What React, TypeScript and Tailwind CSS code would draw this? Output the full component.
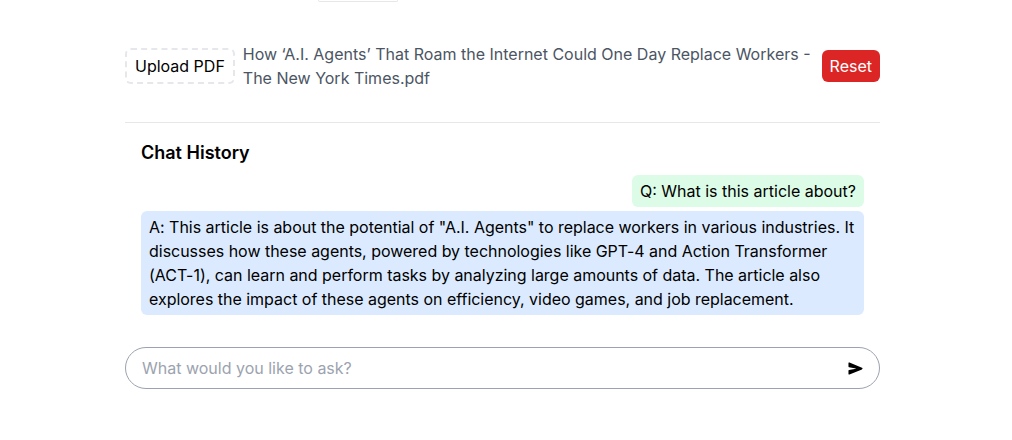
import React from "react";
import { IoSend } from "react-icons/io5";

const answer =
  'A: This article is about the potential of "A.I. Agents" to replace workers in various industries. It discusses how these agents, powered by technologies like GPT-4 and Action Transformer (ACT-1), can learn and perform tasks by analyzing large amounts of data. The article also explores the impact of these agents on efficiency, video games, and job replacement.';

const App = () => {
  return (
    <div className="min-h-[440px] bg-white text-[#111827] font-['Inter','Liberation_Sans',sans-serif]">
      <div className="ml-[125px] w-[755px]">
        {/* bottom edge of the element above, cut off by the viewport */}
        <div className="ml-[193px] w-[80px] h-[2px] border-x border-b border-[#e5e7eb] rounded-b-md" />

        <div className="mt-[40px] flex items-center gap-2">
          <button className="border-2 border-dashed border-[#e5e7eb] rounded-md px-2 py-1 text-base leading-6 whitespace-nowrap text-black">
            Upload PDF
          </button>
          <div className="flex-1 text-[#4b5563] text-base leading-6">
            How ‘A.I. Agents’ That Roam the Internet Could One Day Replace Workers - The New York Times.pdf
          </div>
          <button className="bg-[#dc2626] text-white rounded-md px-2 py-1 text-base leading-6">
            Reset
          </button>
        </div>

        <div className="mt-8 border-t border-[#e5e7eb] px-4 pt-4">
          <h2 className="text-lg leading-7 font-semibold mb-2 text-black">Chat History</h2>
          <div className="flex justify-end mb-1">
            <div className="bg-[#dcfce7] rounded-md px-2 py-1 text-base leading-6 text-black">
              Q: What is this article about?
            </div>
          </div>
          <div className="bg-[#dbeafe] rounded-md pl-2 pr-[3px] py-1 text-base leading-6 text-black tracking-[-0.02px]">
            {answer}
          </div>
        </div>

        <div className="mt-8 flex items-center border border-[#9ca3af] rounded-full px-4 py-2">
          <input
            className="flex-1 outline-none text-base leading-6 placeholder:text-[#9ca3af]"
            placeholder="What would you like to ask?"
          />
          <IoSend className="w-[15px] h-[15px] text-black" />
        </div>
      </div>
    </div>
  );
};

export default App;
